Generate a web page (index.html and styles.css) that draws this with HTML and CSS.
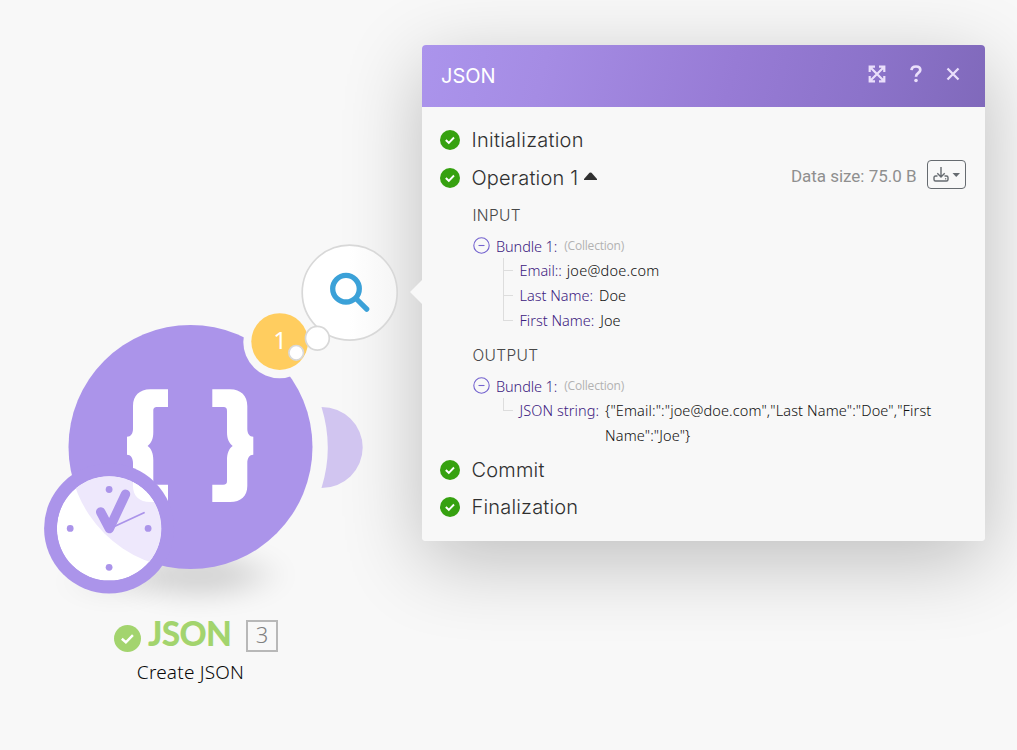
FILE: index.html
```html
<!DOCTYPE html>
<html lang="en">
<head>
<meta charset="utf-8">
<title>JSON</title>
<link rel="stylesheet" href="styles.css">
</head>
<body>
<main class="canvas">
  <div class="popover-shadow"></div>
  <svg class="module" width="422" height="650" viewBox="0 0 422 650">
    <defs>
      <filter id="soft" x="-60%" y="-150%" width="220%" height="400%"><feGaussianBlur stdDeviation="22 13"/></filter>
      <mask id="notch"><rect width="422" height="620" fill="#fff"/><circle cx="279.5" cy="342" r="36.2" fill="#000"/></mask>
      <clipPath id="face"><circle cx="109.1" cy="528.4" r="52.2"/></clipPath>
      <path id="brace" d="M212.3 389.3H230C241 389.3 247.3 396 247.3 406V429C247.3 433.500 249.500 436.700 253.300 436.700V454.700C249.500 454.700 247.300 458 247.300 463V486C247.300 496 241 502 230 502H212.300V484.700H223C226 484.700 227 483.500 227 481V460C227 453 229 448.500 232.700 445.900C229 443 227 439 227 432V411C227 408 226 407 223 407H212.300Z"/>
    </defs>
    <ellipse cx="198" cy="575" rx="64" ry="20" fill="#000" opacity=".15" filter="url(#soft)"/>
    <ellipse cx="115" cy="582" rx="34" ry="12" fill="#000" opacity=".08" filter="url(#soft)"/>
    <path d="M321.500 407A41.200 40.500 0 0 1 362.700 447.500A41.200 40.500 0 0 1 321.500 488A136.500 136.500 0 0 0 321.500 407Z" fill="#d1c5f0"/>
    <circle cx="190.500" cy="447" r="122" fill="#ab94ea" mask="url(#notch)"/>
    <g fill="#fff"><use href="#brace"/><use href="#brace" transform="translate(380.300 0) scale(-1 1)"/></g>
    <circle cx="109.100" cy="528.400" r="65" fill="#ab94ea"/>
    <g clip-path="url(#face)">
      <circle cx="109.100" cy="528.400" r="52.200" fill="#fff"/>
      <circle cx="190.500" cy="447" r="122" fill="#eee8fc"/>
      <use href="#brace" transform="translate(380.300 0) scale(-1 1)" fill="#fff"/>
    </g>
    <g fill="#ab94ea"><circle cx="109.100" cy="489.500" r="3.400"/><circle cx="70.200" cy="528.400" r="3.400"/><circle cx="148.100" cy="528.400" r="3.400"/><circle cx="109.100" cy="567.300" r="3.400"/></g>
    <path d="M100.700 512L109.400 528.500L125.500 494.200" fill="none" stroke="#ab94ea" stroke-width="9.400" stroke-linecap="round" stroke-linejoin="round"/>
    <path d="M110 528.500L144 512.800" stroke="#ab94ea" stroke-width="1.800" stroke-linecap="round"/>
    <circle cx="279.700" cy="341.600" r="28.400" fill="#ffcd5f"/>
    <text class="badge-text" x="280" y="349" text-anchor="middle">1</text>
    <g fill="#fff" stroke="#d8d8d8" stroke-width="1.700">
      <circle cx="349.700" cy="292.600" r="47.500" fill="url(#bubble)"/>
      <circle cx="317.400" cy="338.200" r="11.900"/>
      <circle cx="296.200" cy="352.800" r="7.300"/>
    </g>
    <g fill="none" stroke="#3ba1d8" stroke-width="5.300" stroke-linecap="round"><circle cx="346" cy="288.700" r="13.300"/><path d="M356.500 299L366.700 309.200"/></g>
    <linearGradient id="bubble"><stop offset=".5" stop-color="#fff"/><stop offset="1" stop-color="#f5f5f5"/></linearGradient>
  </svg>

  <section class="caption">
    <div class="caption-row">
      <svg class="caption-check" viewBox="0 0 20 20"><circle cx="10" cy="10" r="10" fill="#a3d46e"/><path d="M5.800 10.200L8.800 12.800L14 7.500" fill="none" stroke="#fff" stroke-width="1.800"/></svg>
      <strong class="caption-name">JSON</strong>
      <span class="caption-count">3</span>
    </div>
    <div class="caption-sub"><span>Create JSON</span></div>
  </section>

  <section class="popover">
    <svg class="pointer" width="12" height="24" viewBox="0 0 12 24"><path d="M12 0V24L0 12Z" fill="#f8f8f8"/></svg>
    <header class="head">
      <h1 class="title">JSON</h1>
      <nav class="actions">
        <svg width="18" height="18" viewBox="0 0 18 18" fill="none" stroke="#eadffb" stroke-width="2.200"><path d="M3 3L15 15M15 3L3 15"/><path d="M1.700 7V1.700H7M11 1.700H16.300V7M16.300 11V16.300H11M7 16.300H1.700V11"/><path d="M1 1H6L1 6ZM17 1V6L12 1ZM17 17H12L17 12ZM1 17V12L6 17Z" fill="#eadffb" stroke="none"/></svg>
        <svg width="12" height="18" viewBox="0 0 12 18"><path d="M1.500 5.200C1.700 2.700 3.400 1.500 6 1.500C8.700 1.500 10.300 2.900 10.300 5C10.300 8.200 6 7.600 6 11.800" fill="none" stroke="#eadffb" stroke-width="2.700"/><circle cx="6" cy="15.500" r="1.800" fill="#eadffb"/></svg>
        <svg width="14" height="14" viewBox="0 0 14 14"><path d="M1.500 1.500L12.500 12.500M12.500 1.500L1.500 12.500" stroke="#eadffb" stroke-width="2.300"/></svg>
      </nav>
    </header>
    <div class="body">
      <div class="step step-first"><svg class="check" viewBox="0 0 20 20"><circle cx="10" cy="10" r="10" fill="#36a110"/><path d="M5.800 10L8.800 12.800L14 7.500" fill="none" stroke="#fff" stroke-width="1.900"/></svg><span class="t-init">Initialization</span></div>
      <div class="step step-op"><svg class="check" viewBox="0 0 20 20"><circle cx="10" cy="10" r="10" fill="#36a110"/><path d="M5.800 10L8.800 12.800L14 7.500" fill="none" stroke="#fff" stroke-width="1.900"/></svg><span class="t-op">Operation 1</span>
        <svg class="caret" width="13" height="8" viewBox="0 0 13 8"><path d="M0 8V7L5.500 .8Q6.500 0 7.500 .8L13 7V8Z" fill="#303030"/></svg>
        <span class="size">Data size: 75.0 B</span>
        <button class="download"><svg width="27" height="16" viewBox="0 0 27 16" fill="none" stroke="#666b70" stroke-width="1.400"><path d="M8 0V10M4.300 6.300L8 10L11.700 6.300"/><path d="M4.500 9H2.500Q1 9 1 10.500V12.500Q1 14 2.500 14H13.500Q15 14 15 12.500V10.500Q15 9 13.500 9H11.500"/><path d="M12.200 11.700H13.200"/><path d="M19.500 6H27L23.250 10Z" fill="#666b70" stroke="none"/></svg></button>
      </div>
      <h2 class="label">INPUT</h2>
      <div class="bundle"><svg class="minus" viewBox="0 0 17 17"><circle cx="8.500" cy="8.500" r="7.700"/><path d="M5.500 8.500H11.500"/></svg><span class="key k-bundle">Bundle 1:</span><span class="kind">(Collection)</span></div>
      <div class="tree">
        <div class="leaf"><span class="key k-email">Email::</span><span class="val v-email">joe@doe.com</span></div>
        <div class="leaf"><span class="key k-last">Last Name:</span><span class="val">Doe</span></div>
        <div class="leaf"><span class="key k-first">First Name:</span><span class="val">Joe</span></div>
      </div>
      <h2 class="label label-out">OUTPUT</h2>
      <div class="bundle"><svg class="minus" viewBox="0 0 17 17"><circle cx="8.500" cy="8.500" r="7.700"/><path d="M5.500 8.500H11.500"/></svg><span class="key k-bundle">Bundle 1:</span><span class="kind">(Collection)</span></div>
      <div class="tree">
        <div class="leaf"><span class="key k-json">JSON string:</span><span class="val v-json">{"Email:":"joe@doe.com","Last Name":"Doe","First<br>Name":"Joe"}</span></div>
      </div>
      <div class="step step-commit"><svg class="check" viewBox="0 0 20 20"><circle cx="10" cy="10" r="10" fill="#36a110"/><path d="M5.800 10L8.800 12.800L14 7.500" fill="none" stroke="#fff" stroke-width="1.900"/></svg><span class="t-commit">Commit</span></div>
      <div class="step"><svg class="check" viewBox="0 0 20 20"><circle cx="10" cy="10" r="10" fill="#36a110"/><path d="M5.800 10L8.800 12.800L14 7.500" fill="none" stroke="#fff" stroke-width="1.900"/></svg><span class="t-final">Finalization</span></div>
    </div>
  </section>
</main>
</body>
</html>
```
FILE: styles.css
```css
* { box-sizing: border-box; }
body { margin: 0; background: #f8f8f8; }
.canvas { position: relative; width: 1017px; height: 750px; overflow: hidden; font-family: "Open Sans", sans-serif; }
.module { position: absolute; left: 0; top: 0; }
.badge-text { font: 24px "Noto Sans", sans-serif; fill: #fff; }

.popover-shadow { position: absolute; left: 422px; top: 45px; width: 563px; height: 496px; border-radius: 4px; box-shadow: 0 20px 80px rgba(0, 0, 0, .24); }
.popover { position: absolute; left: 422px; top: 45px; width: 563px; height: 496px; border-radius: 4px; background: #f8f8f8; }
.pointer { position: absolute; left: -12px; top: 235px; }
.head { height: 62px; border-radius: 4px 4px 0 0; padding: 0 25px 0 19px; display: flex; align-items: center; justify-content: space-between; background: linear-gradient(105deg, #ab94ec 0%, #a58ce4 22%, #977bd5 55%, #8c73ca 78%, #8069bb 100%); }
.title { margin: 0; font: 400 20px Inter, sans-serif; color: #fff; }
.actions { display: flex; align-items: center; gap: 24px; margin-top: -4px; }

.body { padding: 14px 19px 0 18px; }
.step { height: 37.400px; display: flex; align-items: center; font: 300 20px Inter, sans-serif; letter-spacing: .18px; color: #303030; white-space: nowrap; }
.step-op { height: 39px; }
.step-commit { margin-top: 3px; }
.check { width: 20px; height: 20px; margin-right: 11.500px; flex: none; }
.t-init { letter-spacing: .25px; }
.caret { margin: -3px 0 0 6px; }
.size { margin: -4px 10.500px 0 auto; font: 400 17px Roboto, sans-serif; letter-spacing: -.02px; color: #8f8f8f; }
.download { width: 39px; height: 29px; margin-top: -6px; padding: 0; border: 1px solid #666b70; border-radius: 4px; background: none; display: flex; align-items: center; justify-content: center; }

.label { margin: 5px 0 0 32.500px; font: 350 15.500px/27px Inter, sans-serif; letter-spacing: .3px; color: #484848; height: 27px; }
.label-out { margin-top: 9px; }
.bundle { height: 25px; margin: 4px 0 0 33px; display: flex; align-items: center; }
.minus { width: 17px; height: 17px; margin: -1px 6px 0 0; fill: none; stroke: #7463cf; stroke-width: 1.100; }
.kind { margin-left: 7px; font-size: 12px; color: #b2b2b2; letter-spacing: -.2px; }
.tree { padding-left: 63px; }
.leaf { position: relative; display: flex; padding-left: 16.500px; line-height: 25px; }
.leaf::before { content: ""; position: absolute; left: 0; top: 0; width: 9px; height: 12px; border-left: 1px solid #ddd; border-bottom: 1px solid #ddd; }
.leaf:not(:last-child)::after { content: ""; position: absolute; left: 0; top: 12px; bottom: 0; border-left: 1px solid #ddd; }
.key, .val { font-family: "Noto Sans", sans-serif; font-size: 14.500px; font-weight: 350; white-space: nowrap; }
.key { color: #3c2080; }
.k-bundle { letter-spacing: -.1px; }
.k-email { letter-spacing: -.05px; }
.k-json { letter-spacing: .07px; }
.val { margin-left: 6px; color: #101010; letter-spacing: .05px; }
.v-email { margin-left: 5px; letter-spacing: .24px; }
.v-json { letter-spacing: .13px; }

.caption { position: absolute; left: 0; top: 611px; width: 381px; }
.caption-row { height: 44px; display: flex; align-items: center; padding-left: 114px; }
.caption-check { width: 27px; height: 27px; margin: 11px 7px 0 0; }
.caption-name { font: 900 33.500px/44px Lato, sans-serif; letter-spacing: -.7px; color: #a3d46e; }
.caption-count { margin: 5px 103px 0 auto; width: 32px; height: 32px; border: 2px solid #b8b8b8; color: #808080; font: 350 22px/25px "Noto Sans", sans-serif; text-align: center; }
.caption-sub { height: 32px; margin-top: 1px; font: 350 19px/32px "Noto Sans", sans-serif; letter-spacing: .2px; color: #080808; text-align: center; }
```
